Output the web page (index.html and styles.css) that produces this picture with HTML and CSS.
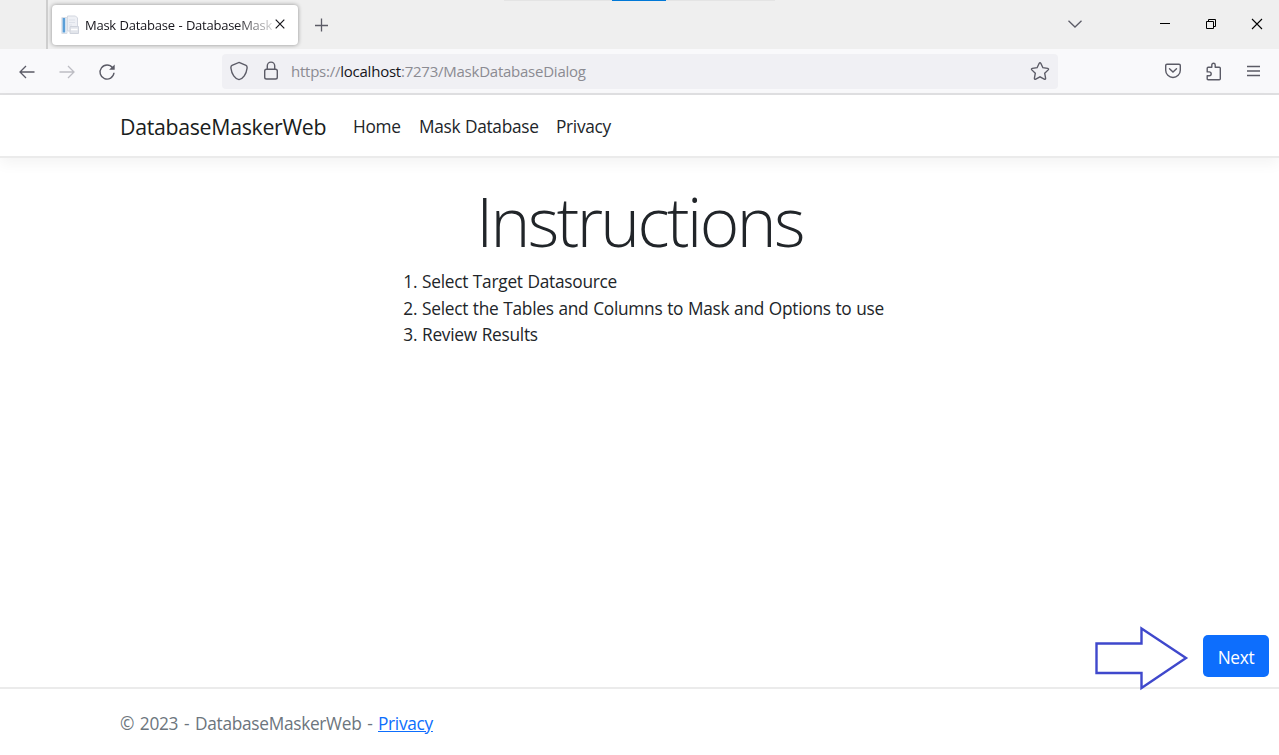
FILE: index.html
```html
<!DOCTYPE html>
<html lang="en">
<head>
<meta charset="utf-8">
<title>Mask Database - DatabaseMaskerWeb</title>
<link rel="stylesheet" href="styles.css">
</head>
<body>
<div class="tabbar">
  <div class="top-hint"></div>
  <div class="tab">
    <svg class="favicon" width="20" height="20" viewBox="0 0 20 20"><path d="M6.500 1h8l2 2v13h-10z" fill="#eef0f5" stroke="#d3d7e0"/><path d="M.8 2.500H6V18.500H.8z" fill="#eaf1f8" stroke="#d9dde5"/><path d="M1.600 3H4.200V17.500H1.600z" fill="#5b9fd8"/><path d="M8 5h6M8 7.500h6M8 10h3" stroke="#dde1e9"/><path d="M9 11.500h8.500v7H9z" fill="#e2e5eb" stroke="#cfd3dc"/><path d="M10 14.500h6.500" stroke="#fff" stroke-width="1.500"/></svg>
    <span class="tab-title">Mask Database - DatabaseMask</span>
    <svg class="tab-close" width="10" height="10" viewBox="0 0 10 10"><path d="M.7.700l8.600 8.600M9.300.700L.7 9.300" stroke="#15141a" stroke-width="1.200"/></svg>
  </div>
  <svg class="new-tab" width="14" height="14" viewBox="0 0 14 14"><path d="M6.500 .5v13M0 7.500h13" stroke="#5b5b66" stroke-width="1.300"/></svg>
  <svg class="all-tabs" width="14" height="8" viewBox="0 0 14 8"><path d="M.5.800L7 7 13.500.800" fill="none" stroke="#5b5b66" stroke-width="1.300"/></svg>
  <svg class="minimize" width="10" height="12" viewBox="0 0 10 12"><path d="M0 5.500h10" stroke="#000"/></svg>
  <svg class="restore" width="10" height="10" viewBox="0 0 10 10"><path d="M.5 2.500h7v7h-7zM2.500 2.500v-2h7v7h-2" fill="none" stroke="#000"/></svg>
  <svg class="win-close" width="12" height="12" viewBox="0 0 12 12"><path d="M1 1l10 10M11 1L1 11" stroke="#000" stroke-width="1.100"/></svg>
</div>
<div class="toolbar">
  <svg class="back" width="16" height="14" viewBox="0 0 16 14"><path d="M7 1L1 7l6 6M1 7h14.500" fill="none" stroke="#5b5b66" stroke-width="1.300"/></svg>
  <svg class="forward" width="16" height="14" viewBox="0 0 16 14"><path d="M9 1l6 6-6 6M15 7H.5" fill="none" stroke="#bdbdc3" stroke-width="1.300"/></svg>
  <svg class="reload" width="18" height="18" viewBox="0 0 18 18"><path d="M14.600 4.800A7 7 0 1 0 16 9.800" fill="none" stroke="#5b5b66" stroke-width="1.400"/><path d="M16.700 1.500v5.300h-5.600z" fill="#5b5b66"/></svg>
  <div class="urlbar">
    <svg class="shield" width="18" height="20" viewBox="0 0 18 20"><path d="M9 1.400L16 4.300Q17.400 5 17 7.500C16.400 13 13 17.800 9 18.600 5 17.800 1.600 13 1 7.500Q.6 5 2 4.300z" fill="none" stroke="#5b5b66" stroke-width="1.400"/></svg>
    <svg class="lock" width="16" height="20" viewBox="0 0 16 20"><rect x="1.700" y="8.200" width="12.600" height="9.800" rx="1.800" fill="none" stroke="#5b5b66" stroke-width="1.400"/><path d="M4.300 8V4.800a3.700 3.700 0 0 1 7.400 0V8" fill="none" stroke="#5b5b66" stroke-width="1.400"/></svg>
    <span class="url">https://<b>localhost</b>:7273/MaskDatabaseDialog</span>
    <svg class="star" width="20" height="20" viewBox="0 0 20 20"><path d="M9.200 2.300q.8-1.400 1.600 0l2.100 4.400 4.800.7q1.400.4.500 1.500l-3.500 3.400.9 4.900q0 1.500-1.400.9L10 15.800l-4.200 2.300q-1.400.6-1.400-.9l.9-4.900-3.500-3.400q-.9-1.100.5-1.500l4.800-.7z" fill="none" stroke="#5b5b66" stroke-width="1.400"/></svg>
  </div>
  <svg class="pocket" width="18" height="16" viewBox="0 0 18 16"><path d="M3 1.200h12q1.300 0 1.300 1.300v4.700a7.300 7.300 0 0 1-14.600 0V2.500Q1.700 1.200 3 1.200z" fill="none" stroke="#5b5b66" stroke-width="1.400"/><path d="M5.500 5.700L9 9l3.500-3.300" fill="none" stroke="#5b5b66" stroke-width="1.400" stroke-linecap="round"/></svg>
  <svg class="puzzle" width="18" height="19" viewBox="0 0 18 19"><path d="M3.200 5.200h3.600V3a1.700 1.700 0 0 1 3.400 0v2.200h4.100q1 0 1 1v10.600q0 1-1 1H3.200q-1 0-1-1V13.700h2.100a1.900 1.900 0 0 0 0-3.800H2.200V6.200q0-1 1-1z" fill="none" stroke="#5b5b66" stroke-width="1.400" stroke-linejoin="round"/></svg>
  <svg class="menu" width="13" height="12" viewBox="0 0 13 12"><path d="M0 1.500h13M0 6h13M0 10.500h13" stroke="#5b5b66" stroke-width="1.300"/></svg>
</div>
<header class="site-nav">
  <a class="brand">DatabaseMaskerWeb</a>
  <a class="nav-link home">Home</a>
  <a class="nav-link mask">Mask Database</a>
  <a class="nav-link">Privacy</a>
</header>
<main class="content">
  <h1 class="title">Instructions</h1>
  <ol class="steps">
    <li>Select Target Datasource</li>
    <li>Select the Tables and Columns to Mask and Options to use</li>
    <li>Review Results</li>
  </ol>
  <div class="actions">
    <svg class="arrow" width="96" height="66" viewBox="0 0 96 66"><path d="M3.500 18.500h45V3.500L93 33 48.500 63v-15h-45z" fill="none" stroke="#3f48cc" stroke-width="2.400"/></svg>
    <button class="next">Next</button>
  </div>
</main>
<footer class="footer"><span class="copy">© 2023 - DatabaseMaskerWeb -</span><a class="privacy">Privacy</a></footer>
</body>
</html>
```
FILE: styles.css
```css
* { box-sizing: border-box; }
body {
  margin: 0;
  width: 1279px;
  height: 755px;
  overflow: hidden;
  display: flex;
  flex-direction: column;
  background: #fff;
  color: #212529;
  font: 17.300px/26.700px "Open Sans", "Noto Sans", sans-serif;
  letter-spacing: -.3px;
  word-spacing: .5px;
}
svg { display: block; flex: none; }
.tabbar {
  position: relative;
  height: 49px;
  flex: none;
  display: flex;
  align-items: center;
  background: #efefef;
  padding-left: 46px;
}
.top-hint {
  position: absolute;
  left: 504px;
  top: 0;
  width: 271px;
  height: 1px;
  background: linear-gradient(90deg, #e4e4e4 108px, #0078d7 108px, #0078d7 162px, #e4e4e4 162px);
}
.tabbar::before { content: ""; flex: none; width: 2px; height: 49px; background: #cecece; }
.tab {
  width: 246px;
  height: 40px;
  flex: none;
  margin-left: 4px;
  border-radius: 4px;
  background: #fff;
  box-shadow: 0 0 4px rgba(0, 0, 0, .4);
  display: flex;
  align-items: center;
  padding-left: 9px;
}
.tab-title {
  width: 190px;
  flex: none;
  margin-left: 4px;
  padding-top: 1px;
  white-space: nowrap;
  font-size: 13px;
  letter-spacing: -.25px;
  color: #15141a;
  mask-image: linear-gradient(90deg, #000 150px, transparent 195px);
}
.new-tab { margin-left: 17px; }
.all-tabs { margin-left: 739px; }
.minimize { margin-left: 78px; }
.restore { margin-left: 36px; }
.win-close { margin-left: 35px; }
.all-tabs, .minimize, .restore, .win-close, .tab-close { margin-bottom: 1px; }
.toolbar {
  height: 46px;
  flex: none;
  display: flex;
  align-items: center;
  background: #f9f9fb;
  border-bottom: 2px solid #e0e0e2;
  padding-left: 19px;
}
.back, .forward, .reload { margin-top: 1px; }
.forward { margin-left: 24px; }
.reload { margin-left: 23px; }
.urlbar {
  width: 836px;
  height: 35px;
  margin-left: 106px;
  padding: 0 8px;
  border-radius: 4px;
  background: #f0f0f4;
  display: flex;
  align-items: center;
}
.lock { margin-left: 15px; }
.url { margin-left: 12px; padding-top: 1px; font-size: 15px; letter-spacing: -.24px; color: #8b8b92; }
.url b { font-weight: 400; color: #15141a; }
.star { margin-left: auto; }
.pocket { margin-left: 106px; }
.puzzle { margin-left: 23px; }
.menu { margin-left: 24px; }
.site-nav {
  height: 63px;
  flex: none;
  display: flex;
  align-items: flex-start;
  padding: 17px 0 0 120px;
  border-bottom: 2px solid #ebebeb;
  box-shadow: 0 5px 14px rgba(0, 0, 0, .05);
}
.brand { width: 233px; font-size: 21.300px; letter-spacing: -.3px; line-height: 30px; color: #1a1d20; }
.nav-link { color: #212529; padding-top: 2px; }
.home { width: 66px; }
.mask { width: 137px; }
.content { flex: 1; display: flex; flex-direction: column; }
.title {
  margin: 23px 0 0;
  text-align: center;
  font-size: 67.500px;
  line-height: 80px;
  font-weight: 300;
  letter-spacing: -2.600px;
}
.steps { margin: 8px 0 0 390px; padding: 0 0 0 32px; letter-spacing: -.26px; }
.actions {
  margin-top: auto;
  height: 62px;
  display: flex;
  justify-content: flex-end;
  align-items: flex-start;
  padding-right: 10px;
}
.arrow { position: relative; z-index: 1; }
.next {
  width: 66px;
  height: 42px;
  margin: 10px 0 0 14px;
  padding: 4px 0 0;
  border: 0;
  border-radius: 5px;
  background: #0d6efd;
  color: #fff;
  font: inherit;
  letter-spacing: inherit;
}
.footer {
  height: 68px;
  flex: none;
  display: flex;
  border-top: 2px solid #ebebeb;
  padding: 22px 0 0 120px;
  color: #6c757d;
}
.copy { width: 258px; word-spacing: 1.600px; }
.privacy { color: #0d6efd; text-decoration: underline; }
```
